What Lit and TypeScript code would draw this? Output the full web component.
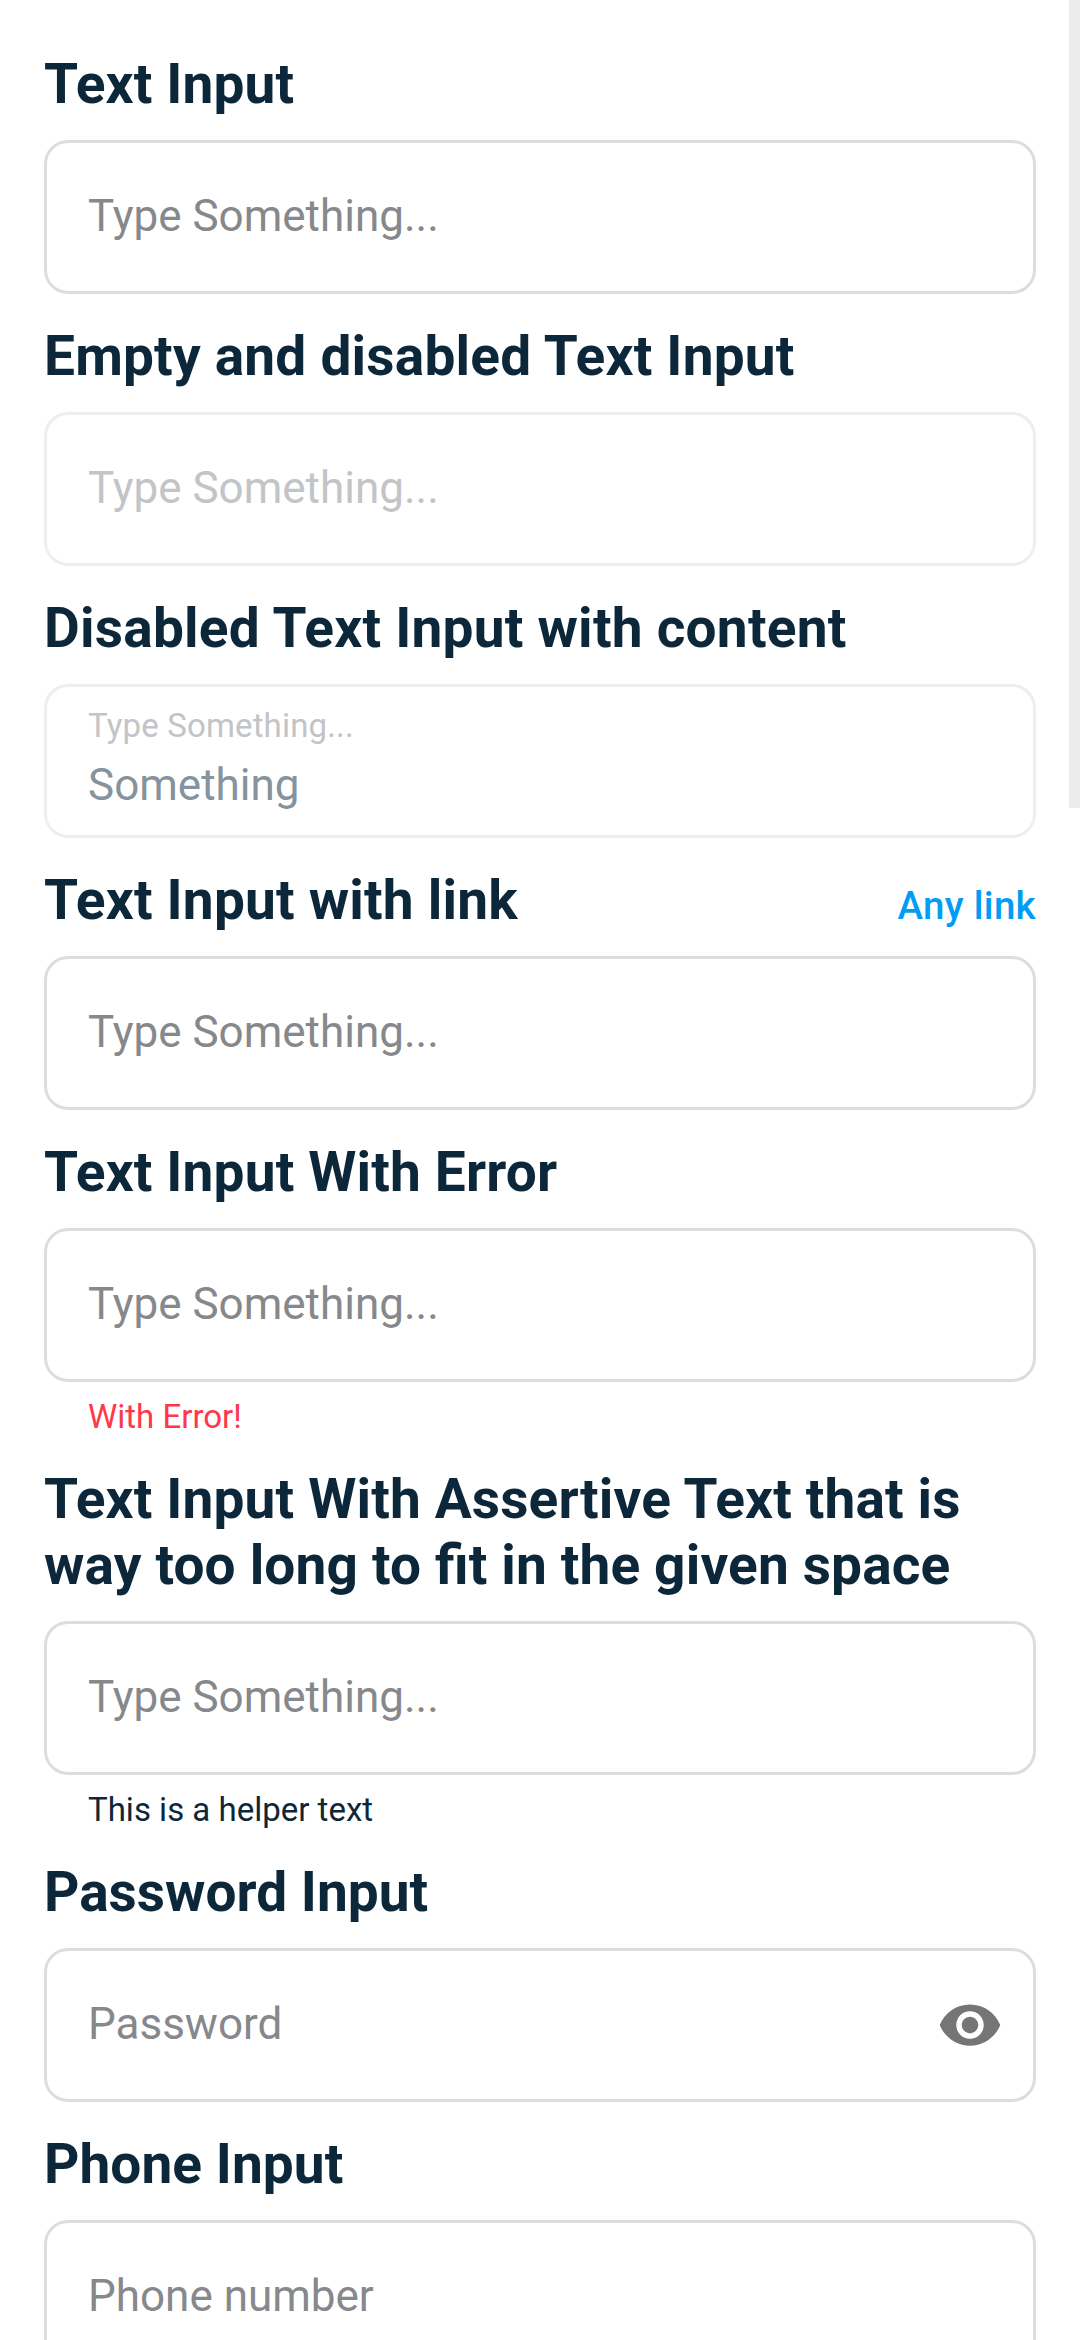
import { LitElement, html, css, nothing } from "lit";
import { customElement, property } from "lit/decorators.js";
import { classMap } from "lit/directives/class-map.js";
import { styleMap } from "lit/directives/style-map.js";

interface Field {
  title: string;
  /** Letter spacing of the title, in pixels. */
  tracking: number;
  label: string;
  value?: string;
  link?: string;
  helper?: string;
  error?: string;
  disabled?: boolean;
  secret?: boolean;
}

const FIELDS: Field[] = [
  { title: "Text Input", tracking: 0.13, label: "Type Something..." },
  { title: "Empty and disabled Text Input", tracking: 0.2, label: "Type Something...", disabled: true },
  {
    title: "Disabled Text Input with content",
    tracking: 0.23,
    label: "Type Something...",
    value: "Something",
    disabled: true,
  },
  { title: "Text Input with link", tracking: 0.2, label: "Type Something...", link: "Any link" },
  { title: "Text Input With Error", tracking: 0.16, label: "Type Something...", error: "With Error!" },
  {
    title: "Text Input With Assertive Text that is way too long to fit in the given space",
    tracking: 0.15,
    label: "Type Something...",
    helper: "This is a helper text",
  },
  { title: "Password Input", tracking: 0, label: "Password", secret: true },
  { title: "Phone Input", tracking: 0.05, label: "Phone number" },
];

@customElement("form-field")
class FormField extends LitElement {
  @property({ attribute: false }) field!: Field;

  static styles = css`
    :host {
      display: block;
    }
    .head {
      display: flex;
      align-items: baseline;
      justify-content: space-between;
      margin-bottom: 23px;
    }
    .title {
      margin: 0;
      font-size: 55px;
      line-height: 66px;
      font-weight: 700;
      font-feature-settings: "liga" 1;
      color: #0b2739;
    }
    .link {
      flex: none;
      font-size: 38.5px;
      line-height: 55px;
      font-weight: 500;
      letter-spacing: 0.3px;
      color: #019df4;
    }
    .box {
      box-sizing: border-box;
      height: 154px;
      border: 3px solid #dddddd;
      border-radius: 24px;
      padding: 0 30px 0 41px;
      display: flex;
      align-items: center;
      justify-content: space-between;
      background: #ffffff;
    }
    .disabled {
      border-color: #eeeeee;
    }
    .texts {
      display: flex;
      flex-direction: column;
      gap: 5px;
      padding-bottom: 2px;
    }
    .label {
      font-size: 44px;
      line-height: 52px;
      color: #86888c;
    }
    .disabled .label {
      color: #c3c4c6;
    }
    .filled .label {
      font-size: 33px;
      line-height: 45px;
      letter-spacing: 0.16px;
    }
    .value {
      font-size: 44px;
      line-height: 64px;
      color: #85939c;
    }
    .eye {
      flex: none;
      width: 66px;
      height: 66px;
      fill: #757575;
    }
    .note {
      margin: 14px 44px 0;
      font-size: 33px;
      line-height: 41px;
      color: #0b2739;
    }
    .error {
      color: #ff374a;
    }
  `;

  render() {
    const f = this.field;
    const note = f.error ?? f.helper;
    return html`
      <div class="head">
        <h2 class="title" style=${styleMap({ letterSpacing: `${f.tracking}px` })}>${f.title}</h2>
        ${f.link ? html`<span class="link">${f.link}</span>` : nothing}
      </div>
      <div class=${classMap({ box: true, disabled: !!f.disabled, filled: !!f.value })}>
        <div class="texts">
          <span class="label">${f.label}</span>
          ${f.value ? html`<span class="value">${f.value}</span>` : nothing}
        </div>
        ${f.secret
          ? html`<svg class="eye" viewBox="0 0 24 24">
              <path
                d="M12 4.5C7 4.5 2.73 7.61 1 12c1.73 4.39 6 7.5 11 7.5s9.27-3.11 11-7.5c-1.73-4.39-6-7.5-11-7.5zM12 17c-2.76 0-5-2.24-5-5s2.24-5 5-5 5 2.24 5 5-2.24 5-5 5zm0-8c-1.66 0-3 1.34-3 3s1.34 3 3 3 3-1.34 3-3-1.34-3-3-3z"
              />
            </svg>`
          : nothing}
      </div>
      ${note ? html`<div class=${classMap({ note: true, error: !!f.error })}>${note}</div>` : nothing}
    `;
  }
}

@customElement("app-root")
class AppRoot extends LitElement {
  static styles = css`
    :host {
      display: block;
      position: relative;
      box-sizing: border-box;
      height: 2340px;
      overflow: hidden;
      background: #ffffff;
      font-family: Roboto, sans-serif;
    }
    .list {
      display: flex;
      flex-direction: column;
      gap: 29px;
      padding: 51px 44px 0;
    }
    .scrollbar {
      position: absolute;
      top: 0;
      right: 0;
      width: 11px;
      height: 808px;
      background: #ececec;
    }
  `;

  render() {
    return html`
      <div class="list">${FIELDS.map((f) => html`<form-field .field=${f}></form-field>`)}</div>
      <div class="scrollbar"></div>
    `;
  }
}
